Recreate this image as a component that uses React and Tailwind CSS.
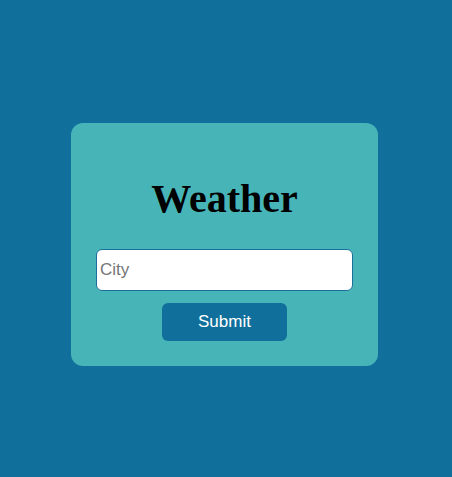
import { useState } from "react";

const App = () => {
    const [city, setCity] = useState('');

    return (
        <div className="min-h-screen w-full bg-[#10709b] flex justify-center items-start pt-[123px] pr-[3px]">
            <div className="w-[307px] bg-[#47b5b8] rounded-[12px] flex flex-col items-center pt-[53px] pb-[25px]">
                <h1 className="font-['Liberation_Serif',serif] font-bold text-[40px] leading-[45px] text-black">Weather</h1>
                <input
                    type="text"
                    placeholder="City"
                    value={city}
                    onChange={(ev) => setCity(ev.target.value)}
                    className="mt-[28px] w-[257px] h-[42px] bg-white border border-[#1a6f9c] rounded-[6px] px-[3px] font-['Liberation_Sans',Arial,sans-serif] text-[17px] text-black placeholder:text-[#757575] outline-none"
                />
                <button className="mt-[12px] w-[125px] h-[38px] bg-[#10709b] rounded-[6px] text-white font-['Liberation_Sans',Arial,sans-serif] text-[17px]">
                    Submit
                </button>
            </div>
        </div>
    )
};

export default App;
